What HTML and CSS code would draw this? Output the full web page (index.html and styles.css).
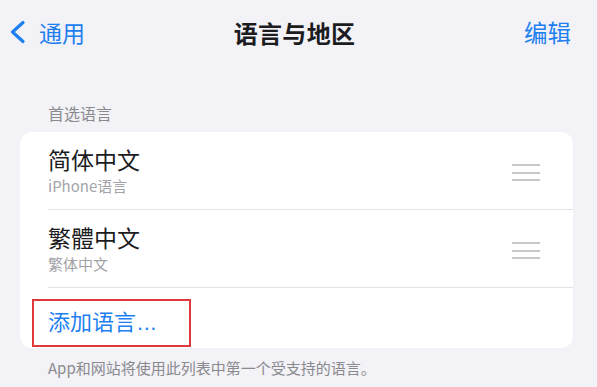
FILE: index.html
```html
<html>
  <head>
    <title>语言与地区</title>
    <meta charset="utf-8">
    <link rel="stylesheet" href="styles.css">
  </head>
  <body>
    <div class="nav">
      <div class="nav-left">
        <svg class="chevron" width="17" height="24" viewBox="0 0 17 24">
          <path d="M14 2.5 L3.5 12 L14 21.5" fill="none" stroke="#1e7ff0" stroke-width="3.2" stroke-linecap="round" stroke-linejoin="round"/>
        </svg>
        <span class="back">通用</span>
      </div>
      <div class="nav-title">语言与地区</div>
      <div class="nav-right">编辑</div>
    </div>

    <div class="section-title">首选语言</div>
    <div class="card">
      <div class="row">
        <div class="row-text">
          <div class="lang">简体中文</div>
          <div class="sub">iPhone语言</div>
        </div>
        <div class="handle"><span></span><span></span><span></span></div>
      </div>
      <div class="row">
        <div class="row-text">
          <div class="lang">繁體中文</div>
          <div class="sub">繁体中文</div>
        </div>
        <div class="handle"><span></span><span></span><span></span></div>
      </div>
      <div class="row add-row">
        <span class="add">添加语言<span class="dots">...</span></span>
        <div class="highlight"></div>
      </div>
    </div>
    <div class="footer">App和网站将使用此列表中第一个受支持的语言。</div>
  </body>
</html>
```
FILE: styles.css
```css
body {
  margin: 0;
  background-color: #f2f2f7;
  font-family: "Noto Sans CJK SC", "Noto Sans", sans-serif;
  color: #1c1c1e;
}
.nav {
  height: 64px;
  display: grid;
  grid-template-columns: 1fr auto 1fr;
  align-items: center;
  padding: 0 26px 0 26px;
}
.nav-left {display: flex; align-items: center; color: #1e7ff0; font-size: 23px; margin-left: -17px;}
.chevron {margin-right: 13px;}
.nav-title {font-size: 24px; font-weight: bold; letter-spacing: 0.3px; margin-right: 8px;}
.nav-right {justify-self: end; color: #1e7ff0; font-size: 23.5px;}

.section-title {
  margin: 38px 0 0 48px;
  font-size: 16px;
  line-height: 22px;
  color: #8a8a8e;
}
.card {
  margin: 8px 24px 0 20px;
  background: #ffffff;
  border-radius: 12px;
}
.row {
  height: 78px;
  box-sizing: border-box;
  margin-left: 28px;
  padding-top: 13px;
  border-bottom: 1px solid #e3e3e7;
  display: flex;
  justify-content: space-between;
}
.lang {font-size: 23px; line-height: 28px;}
.sub {font-size: 15px; line-height: 18px; margin-top: 4px; color: #a3a3a8;}
.handle {
  width: 28px;
  margin: 19px 33px 0 0;
  display: flex;
  flex-direction: column;
  gap: 5.5px;
}
.handle span {display: block; height: 2px; background: #c8c8cc;}

.add-row {
  height: 60px;
  padding-top: 4px;
  border-bottom: none;
  align-items: center;
  position: relative;
}
.add {font-size: 22px; color: #1e7ff0;}
.dots {font-family: "Liberation Sans", sans-serif; letter-spacing: 0.5px; margin-left: 1px;}
.highlight {
  position: absolute;
  left: -16px;
  top: 11px;
  width: 155px;
  height: 44px;
  border: 2px solid #e0393b;
}
.footer {
  margin: 10px 0 0 48px;
  font-size: 15px;
  line-height: 20px;
  color: #8a8a8e;
}
```
